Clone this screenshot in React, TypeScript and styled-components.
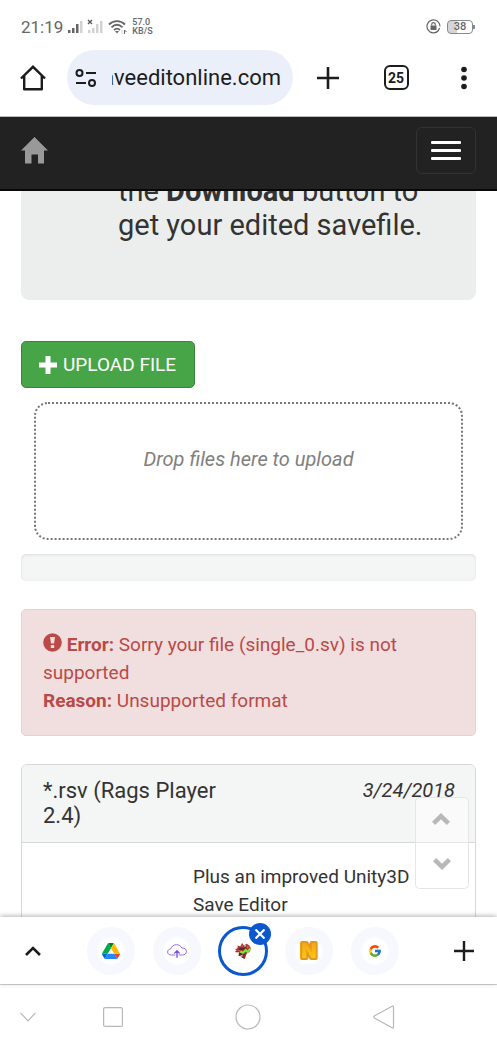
import React from 'react';
import styled, { createGlobalStyle, css } from 'styled-components';
import { FcGoogle } from 'react-icons/fc';

const GlobalStyle = createGlobalStyle`
  *, *::before, *::after { box-sizing: border-box; }
  html, body, #root { height: 100%; }
  body { margin: 0; background: #fff; color: #333; font: 19px/28px Roboto, "Liberation Sans", sans-serif; }
  button, input { font: inherit; color: inherit; }
  svg { display: block; flex: none; }
`;

const Screen = styled.div`
  display: flex;
  flex-direction: column;
  height: 100vh;
  overflow: hidden;
`;

const StatusBar = styled.header`
  display: flex;
  align-items: center;
  justify-content: space-between;
  height: 38px;
  padding: 15px 24px 0 21px;
  color: #666;
  font-size: 17px;
  line-height: 24px;
`;

const StatusGroup = styled.div<{ $gap: number }>`
  display: flex;
  align-items: center;
  gap: ${(p) => p.$gap}px;
`;

const Speed = styled.div`
  font-size: 9px;
  line-height: 9px;
  font-weight: 500;
`;

const Battery = styled.div`
  position: relative;
  width: 26px;
  height: 14px;
  border: 1px solid #888;
  border-radius: 4px;
  background: linear-gradient(90deg, #d5d5d5 38%, #fff 38%);
  font-size: 11px;
  line-height: 12px;
  font-weight: 500;
  text-align: center;

  &::after {
    content: '';
    position: absolute;
    top: 4px;
    right: -3px;
    width: 2px;
    height: 4px;
    background: #888;
  }
`;

const BrowserBar = styled.div`
  display: flex;
  align-items: center;
  height: 79px;
  padding: 1px 21px 0;
  border-bottom: 1px solid #bbb;
`;

const IconButton = styled.button`
  display: flex;
  align-items: center;
  justify-content: center;
  flex: none;
  width: 24px;
  height: 48px;
  padding: 0;
  border: 0;
  background: none;
  color: #1b1c1e;
  cursor: pointer;
`;

const AddressBox = styled.label`
  display: flex;
  align-items: center;
  gap: 15px;
  flex: 1;
  min-width: 0;
  height: 55px;
  margin: 0 23px 0 22px;
  padding: 0 12px 0 8px;
  border-radius: 28px;
  background: #ebeff9;
`;

const AddressInput = styled.input`
  flex: 1;
  min-width: 0;
  height: 32px;
  padding: 0;
  border: 0;
  outline: 0;
  background: none;
  color: #1b1c1e;
  font-size: 22px;
  direction: rtl;
`;

const BrowserActions = styled.div`
  display: flex;
  gap: 44px;
`;

const TabCount = styled.span`
  display: flex;
  align-items: center;
  justify-content: center;
  flex: none;
  width: 25px;
  height: 25px;
  border: 2px solid #1b1c1e;
  border-radius: 6px;
  font-size: 14px;
  line-height: 20px;
  font-weight: 700;
`;

const Viewport = styled.div`
  position: relative;
  flex: 1;
  min-height: 0;
  overflow: hidden;
`;

const Navbar = styled.nav`
  position: relative;
  z-index: 1;
  display: flex;
  align-items: center;
  justify-content: space-between;
  height: 74px;
  padding: 0 21px 5px;
  border-bottom: 2px solid #080808;
  background: #222;
`;

const HomeLink = styled.a`
  color: #999;
`;

const MenuToggle = styled.button`
  display: flex;
  flex-direction: column;
  align-items: center;
  justify-content: center;
  gap: 5px;
  width: 60px;
  height: 47px;
  padding: 0;
  border: 1px solid #333;
  border-radius: 6px;
  background: none;
`;

const MenuBar = styled.span`
  width: 30px;
  height: 3px;
  border-radius: 1px;
  background: #fff;
`;

const Content = styled.main`
  margin-top: -17px;
  padding: 0 21px;
`;

const Jumbotron = styled.section`
  margin-bottom: 41px;
  padding: 0 42px 58px 97px;
  border-radius: 8px;
  background: #eceeee;
  font-size: 29px;
  line-height: 34px;

  p { margin: 0; }
`;

const UploadButton = styled.button`
  display: flex;
  align-items: center;
  gap: 6px;
  height: 47px;
  padding: 0 18px 0 17px;
  border: 1px solid #398439;
  border-radius: 5px;
  background: #47a447;
  color: #fff;
  text-transform: uppercase;
`;

const DropZone = styled.div`
  height: 138px;
  margin: 14px 13px;
  padding-top: 41px;
  border: 2px dotted #777;
  border-radius: 14px;
  color: #808080;
  font-size: 20px;
  font-style: italic;
  text-align: center;
`;

const ProgressTrack = styled.div`
  height: 27px;
  border-radius: 5px;
  background: #f4f5f5;
  box-shadow: inset 0 1px 3px rgba(0, 0, 0, 0.1);
`;

const ErrorAlert = styled.div`
  margin: 28px 0;
  padding: 21px 21px 20px;
  border: 1px solid #e9ced2;
  border-radius: 5px;
  background: #f1dede;
  color: #b94a48;

  svg { display: inline-block; vertical-align: -1px; }
`;

const Panel = styled.article`
  border: 1px solid #d8d8d8;
  border-radius: 6px;
`;

const PanelHeader = styled.header`
  display: flex;
  justify-content: space-between;
  padding: 13px 20px 14px 21px;
  border-bottom: 1px solid #d8d8d8;
  border-radius: 5px 5px 0 0;
  background: #f4f5f5;
`;

const PanelTitle = styled.h2`
  width: 50%;
  margin: 0;
  font-size: 22px;
  line-height: 25px;
  font-weight: 400;
`;

const PanelDate = styled.time`
  font-size: 20px;
  font-style: italic;
  line-height: 24px;
`;

const PanelBody = styled.div`
  padding: 20px 21px 21px 171px;
  min-height: 140px;

  p { margin: 0; }
`;

const ScrollButtons = styled.div`
  position: absolute;
  z-index: 1;
  right: 28px;
  bottom: 28px;
  display: flex;
  flex-direction: column;
  width: 54px;
`;

const ScrollButton = styled.button<{ $last?: boolean }>`
  display: flex;
  align-items: center;
  justify-content: center;
  height: 46px;
  padding: 0 2px 2px 0;
  border: 1px solid #e6e6e6;
  border-radius: 5px 5px 0 0;
  background: rgba(255, 255, 255, 0.5);
  color: #b8b8b8;
  ${(p) => p.$last && css`
    padding: 0 0 4px;
    border-top: 0;
    border-radius: 0 0 5px 5px;
    background: rgba(255, 255, 255, 0.9);
  `}
`;

const TabStrip = styled.div`
  position: relative;
  z-index: 2;
  display: flex;
  align-items: center;
  height: 67px;
  padding: 0 21px;
  background: #fff;
  box-shadow: 0 -1px 5px rgba(0, 0, 0, 0.3);
`;

const Tabs = styled.div`
  display: flex;
  flex: 1;
  gap: 16px;
  margin-left: 41px;
`;

const Tab = styled.button<{ $active?: boolean }>`
  position: relative;
  display: flex;
  align-items: center;
  justify-content: center;
  width: 50px;
  height: 50px;
  padding: 0;
  border: ${(p) => (p.$active ? '3px solid #0b57d0' : '1px solid #fff')};
  border-radius: 50%;
  background: ${(p) => (p.$active ? '#fff' : 'radial-gradient(circle, #fff 12px, #f7f8fd 15px)')};
`;

const CloseBadge = styled.span`
  position: absolute;
  top: -6px;
  right: -6px;
  display: flex;
  align-items: center;
  justify-content: center;
  width: 22px;
  height: 22px;
  border-radius: 50%;
  background: #0b57d0;
`;

const SystemNav = styled.footer`
  display: grid;
  grid-template-columns: 45px 1fr 1fr 1fr 45px;
  align-items: center;
  justify-items: center;
  height: 66px;
  padding-bottom: 2px;
  border-top: 1px solid #d4d4d4;
`;

const SystemButton = styled(IconButton)<{ $edge?: boolean }>`
  width: 28px;
  color: #b8b8b8;
  ${(p) => p.$edge && css`justify-self: end; width: 34px;`}
`;

const DriveLogo = () => (
  <svg width="18" height="16" viewBox="0 0 87.3 78">
    <path fill="#0066da" d="m6.6 66.85 3.85 6.65c.8 1.4 1.95 2.5 3.3 3.3l13.75-23.8h-27.5c0 1.55.4 3.1 1.2 4.5z" />
    <path fill="#00ac47" d="m43.65 25-13.75-23.8c-1.35.8-2.5 1.9-3.3 3.3l-25.4 44a9.06 9.06 0 0 0 -1.2 4.5h27.5z" />
    <path fill="#ea4335" d="m73.55 76.8c1.35-.8 2.5-1.9 3.3-3.3l1.6-2.75 7.65-13.25c.8-1.4 1.2-2.95 1.2-4.5h-27.5l5.85 11.5z" />
    <path fill="#00832d" d="m43.65 25 13.75-23.8c-1.35-.8-2.9-1.2-4.5-1.2h-18.5c-1.6 0-3.15.45-4.5 1.2z" />
    <path fill="#2684fc" d="m59.8 53h-32.3l-13.75 23.8c1.35.8 2.9 1.2 4.5 1.2h50.8c1.6 0 3.15-.45 4.5-1.2z" />
    <path fill="#ffba00" d="m73.4 26.5-12.7-22c-.8-1.4-1.95-2.5-3.3-3.3l-13.75 23.8 16.15 28h27.45c0-1.55-.4-3.1-1.2-4.5z" />
  </svg>
);

const CloudUpload = () => (
  <svg width="20" height="14" viewBox="0 0 20 14" fill="none" stroke="#9a6be0" strokeLinecap="round" strokeLinejoin="round">
    <path d="M8 11H4.5C2 11 .6 9.700.6 7.900C.6 6.200 2 5 3.700 5C4.400 2.400 6.700.7 9.500.7C12 .7 14 2 14.800 4C17.500 3.800 19.400 5.300 19.400 7.500C19.400 9.700 17.700 11 15.500 11H12" />
    <path stroke="#7447d6" strokeWidth="1.300" d="M10 13.300V7M7.700 9.100L10 6.800L12.300 9.100" />
  </svg>
);

const DragonLogo = () => (
  <svg width="18" height="18" viewBox="0 0 20 20">
    <path fill="#a5302b" d="M1 8L4 7L4 4L7 5L9 1L11 4L14 2L17 4L19 7L17 11L14 13L12 19L8 16L5 15L6 12L1 11L3 9Z" />
    <path fill="#4a2d28" d="M7 6L10 7L13 5L12 8L8 9L5 8ZM6 12L9 12L9 15L5 15ZM12 13L10 16L12 19L8 17L9 14Z" />
    <path fill="#d95a50" d="M9 2L10 5L8 6ZM3 9L7 9L8 11L5 10ZM14 4L17 5L15 8Z" />
    <path fill="#cdbcb4" d="M11 4L14 3L12 6ZM7 15L10 14L9 17ZM3 11L6 11L5 13Z" />
    <path fill="none" stroke="#74e63c" strokeWidth="2.400" d="M7 10.500L10 12L13 9L15 11L18.500 7" />
  </svg>
);

const NLogo = () => (
  <svg width="24" height="24" viewBox="0 0 24 24">
    <defs>
      <linearGradient id="gold" x1="0" y1="0" x2="0" y2="1">
        <stop offset="0" stopColor="#ef9f1d" />
        <stop offset="1" stopColor="#fdd00f" />
      </linearGradient>
    </defs>
    <g fontFamily="Inter, sans-serif" fontWeight="900" fontSize="20" textAnchor="middle" strokeLinejoin="round">
      <text x="12" y="19" fill="url(#gold)" stroke="#e2991a" strokeWidth="4" paintOrder="stroke">N</text>
    </g>
  </svg>
);

export default function App() {
  return (
    <Screen>
      <GlobalStyle />
      <StatusBar>
        <StatusGroup $gap={5}>
          <span>21:19</span>
          <svg width="35" height="16" viewBox="0 0 35 16" fill="#666">
            <rect x="0" y="11" width="2.500" height="3" />
            <rect x="4" y="9" width="2.500" height="5" />
            <rect x="8" y="5" width="2.500" height="9" />
            <rect x="12" y="2" width="2.500" height="12" fill="#d2d2d2" />
            <path d="M20 1L24 5M24 1L20 5" stroke="#555" strokeWidth="1.300" />
            <g fill="#d2d2d2">
              <rect x="20" y="11" width="2.500" height="3" />
              <rect x="24" y="9" width="2.500" height="5" />
              <rect x="28" y="5" width="2.500" height="9" />
              <rect x="32" y="2" width="2.500" height="12" />
            </g>
          </svg>
          <svg width="19" height="16" viewBox="0 0 19 16" fill="none" stroke="#666" strokeWidth="1.800">
            <path d="M1 5.500C5.500 1 12.500 1 17 5.500M3.500 8.300C7 5 11 5 14.500 8.300M6 11C8 9.200 10 9.200 12 11" />
            <path d="M7 12L9 14.500L11 12Z" fill="#666" stroke="none" />
            <path d="M14 11V15" stroke="#ccc" strokeWidth="1" />
            <path d="M16.500 15V11L18.500 13" strokeWidth="1" />
          </svg>
          <Speed>57.0<br />KB/S</Speed>
        </StatusGroup>
        <StatusGroup $gap={6}>
          <svg width="15" height="15" viewBox="0 0 15 15" fill="none" stroke="#666">
            <path d="M12.500 11.500A6.500 6.500 0 1 1 14 7.500M12.500 11.500L13.500 9" strokeWidth="1.200" />
            <rect x="4.500" y="6.500" width="6" height="4.500" fill="#666" stroke="none" />
            <path d="M5.700 6.500V5.500A1.800 1.800 0 0 1 9.300 5.500V6.500" strokeWidth="1.200" />
          </svg>
          <Battery>38</Battery>
        </StatusGroup>
      </StatusBar>

      <BrowserBar>
        <IconButton aria-label="Home">
          <svg width="26" height="26" viewBox="0 0 26 26" fill="none" stroke="currentColor" strokeWidth="2.400" strokeLinejoin="round">
            <path d="M1 13.500L13 1.800L25 13.500" strokeLinejoin="miter" />
            <path d="M4.200 11V24.200H21.800V11" />
          </svg>
        </IconButton>
        <AddressBox>
          <svg width="22" height="18" viewBox="0 0 22 18" fill="none" stroke="#1b1c1e" strokeWidth="2">
            <circle cx="4.500" cy="4" r="3" />
            <path d="M11 4H21M1 14H11" />
            <circle cx="17" cy="14" r="3" />
          </svg>
          <AddressInput aria-label="Address" defaultValue="saveeditonline.com" />
        </AddressBox>
        <BrowserActions>
          <IconButton aria-label="New tab">
            <svg width="22" height="22" viewBox="0 0 22 22" stroke="currentColor" strokeWidth="2.600">
              <path d="M11 0V22M0 11H22" />
            </svg>
          </IconButton>
          <IconButton aria-label="Switch tabs"><TabCount>25</TabCount></IconButton>
          <IconButton aria-label="More options">
            <svg width="6" height="24" viewBox="0 0 6 24" fill="currentColor">
              <circle cx="3" cy="3.500" r="2.800" />
              <circle cx="3" cy="12" r="2.800" />
              <circle cx="3" cy="20.500" r="2.800" />
            </svg>
          </IconButton>
        </BrowserActions>
      </BrowserBar>

      <Viewport>
        <Navbar>
          <HomeLink href="#" aria-label="Home page">
            <svg width="27" height="27" viewBox="0 0 27 27" fill="currentColor">
              <path d="M13.500 0L27 13.500H23V26.500H17V17.500H10.500V26.500H4V13.500H0Z" />
            </svg>
          </HomeLink>
          <MenuToggle aria-label="Toggle navigation">
            <MenuBar /><MenuBar /><MenuBar />
          </MenuToggle>
        </Navbar>
        <Content>
          <Jumbotron>
            <p>the <strong>Download</strong> button to get your edited savefile.</p>
          </Jumbotron>
          <UploadButton>
            <svg width="18" height="18" viewBox="0 0 18 18" fill="currentColor">
              <path d="M6.500 0H11.500V6.500H18V11.500H11.500V18H6.500V11.500H0V6.500H6.500Z" />
            </svg>
            Upload file
          </UploadButton>
          <DropZone>Drop files here to upload</DropZone>
          <ProgressTrack />
          <ErrorAlert role="alert">
            <svg width="19" height="19" viewBox="0 0 19 19">
              <circle cx="9.500" cy="9.500" r="9.300" fill="#b94a48" />
              <path d="M7 4H12L11 10.500H8ZM7.800 12H11.200V15H7.800Z" fill="#f1dede" />
            </svg>{' '}
            <strong>Error:</strong> Sorry your file (single_0.sv) is not supported
            <br />
            <strong>Reason:</strong> Unsupported format
          </ErrorAlert>
          <Panel>
            <PanelHeader>
              <PanelTitle>*.rsv (Rags Player 2.4)</PanelTitle>
              <PanelDate dateTime="2018-03-24">3/24/2018</PanelDate>
            </PanelHeader>
            <PanelBody>
              <p>Plus an improved Unity3D Save Editor</p>
            </PanelBody>
          </Panel>
        </Content>
        <ScrollButtons>
          <ScrollButton aria-label="Scroll up">
            <svg width="18" height="12" viewBox="0 0 18 12" fill="none" stroke="currentColor" strokeWidth="4.500">
              <path d="M1.600 10.400L9 3.200L16.400 10.400" />
            </svg>
          </ScrollButton>
          <ScrollButton $last aria-label="Scroll down">
            <svg width="18" height="12" viewBox="0 0 18 12" fill="none" stroke="currentColor" strokeWidth="4.500">
              <path d="M1.600 1.600L9 8.800L16.400 1.600" />
            </svg>
          </ScrollButton>
        </ScrollButtons>
      </Viewport>

      <TabStrip>
        <IconButton aria-label="Expand tab group">
          <svg width="16" height="10" viewBox="0 0 16 10" fill="none" stroke="currentColor" strokeWidth="2.600">
            <path d="M1 9L8 2L15 9" />
          </svg>
        </IconButton>
        <Tabs>
          <Tab aria-label="Drive tab"><DriveLogo /></Tab>
          <Tab aria-label="Cloud upload tab"><CloudUpload /></Tab>
          <Tab $active aria-label="Close current tab">
            <DragonLogo />
            <CloseBadge>
              <svg width="10" height="10" viewBox="0 0 10 10" stroke="#fff" strokeWidth="2.200">
                <path d="M.5 .5L9.500 9.500M9.500 .5L.5 9.500" />
              </svg>
            </CloseBadge>
          </Tab>
          <Tab aria-label="N tab"><NLogo /></Tab>
          <Tab aria-label="Google tab"><FcGoogle size={14} /></Tab>
        </Tabs>
        <IconButton aria-label="Add tab to group">
          <svg width="20" height="20" viewBox="0 0 20 20" stroke="currentColor" strokeWidth="2.400">
            <path d="M10 0V20M0 10H20" />
          </svg>
        </IconButton>
      </TabStrip>

      <SystemNav>
        <SystemButton $edge aria-label="Hide bar">
          <svg width="16" height="10" viewBox="0 0 16 10" fill="none" stroke="currentColor" strokeWidth="1.200">
            <path d="M.5 .8L8 8.800L15.500 .8" />
          </svg>
        </SystemButton>
        <SystemButton aria-label="Recent apps">
          <svg width="20" height="20" viewBox="0 0 20 20" fill="none" stroke="currentColor" strokeWidth="1.200">
            <rect x=".6" y=".6" width="18.800" height="18.800" rx="1.500" />
          </svg>
        </SystemButton>
        <SystemButton aria-label="Home screen">
          <svg width="26" height="26" viewBox="0 0 26 26" fill="none" stroke="currentColor" strokeWidth="1.200">
            <circle cx="13" cy="13" r="12" />
          </svg>
        </SystemButton>
        <SystemButton aria-label="Back">
          <svg width="22" height="24" viewBox="0 0 22 24" fill="none" stroke="currentColor" strokeWidth="1.200" strokeLinejoin="round">
            <path d="M19.500 1Q20.500 .6 20.500 1.800V22.200Q20.500 23.400 19.500 23L1.300 13Q.2 12 1.300 11Z" />
          </svg>
        </SystemButton>
      </SystemNav>
    </Screen>
  );
}
